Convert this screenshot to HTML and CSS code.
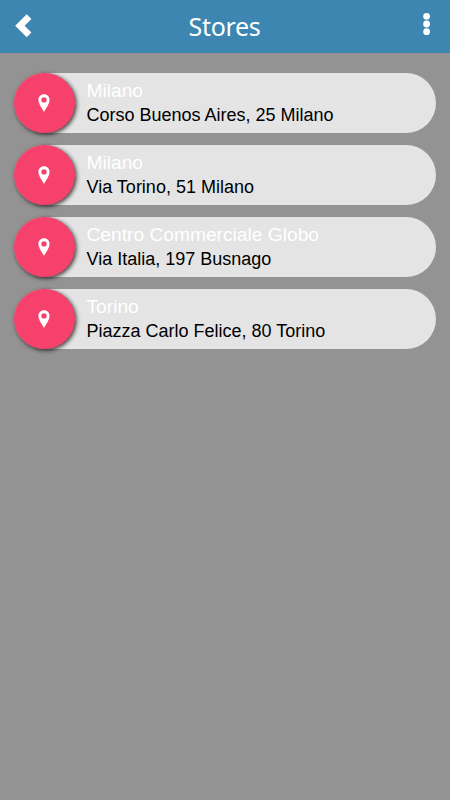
FILE: index.html
```html
<!DOCTYPE html>
<html lang="it">
<head>
  <meta charset="UTF-8">
  <meta name="viewport" content="width=device-width, initial-scale=1.0">
  <title>Stores</title>
  <link rel="stylesheet" href="styles.css">
</head>
<body>
  <svg width="0" height="0" class="sprite">
    <symbol id="pin" viewBox="0 0 12 18">
      <path fill-rule="evenodd" d="M6 0.3C2.8 0.3 0.4 2.7 0.4 5.9C0.4 9.7 6 17.7 6 17.7S11.6 9.7 11.6 5.9C11.6 2.7 9.2 0.3 6 0.3ZM6 3.2A2.7 2.7 0 1 1 6 8.6A2.7 2.7 0 1 1 6 3.2Z"/>
    </symbol>
  </svg>

  <header class="top-bar">
    <button class="bar-button" aria-label="Back">
      <svg width="18" height="24" viewBox="0 0 18 24"><path d="M11.7 0.2L16.4 4.9L9.6 11.7L16.4 18.5L11.7 23.2L0.2 11.7Z"/></svg>
    </button>
    <h1 class="title">Stores</h1>
    <button class="bar-button menu" aria-label="Menu">
      <svg width="8" height="24" viewBox="0 0 8 24"><circle cx="3.6" cy="4.3" r="3.4"/><circle cx="3.6" cy="12" r="3.4"/><circle cx="3.6" cy="19.7" r="3.4"/></svg>
    </button>
  </header>

  <ul class="stores">
    <li class="store">
      <span class="marker"><svg width="12" height="18"><use href="#pin"/></svg></span>
      <div class="info">
        <div class="name">Milano</div>
        <div class="address">Corso Buenos Aires, 25 Milano</div>
      </div>
    </li>
    <li class="store">
      <span class="marker"><svg width="12" height="18"><use href="#pin"/></svg></span>
      <div class="info">
        <div class="name">Milano</div>
        <div class="address">Via Torino, 51 Milano</div>
      </div>
    </li>
    <li class="store">
      <span class="marker"><svg width="12" height="18"><use href="#pin"/></svg></span>
      <div class="info">
        <div class="name">Centro Commerciale Globo</div>
        <div class="address">Via Italia, 197 Busnago</div>
      </div>
    </li>
    <li class="store">
      <span class="marker"><svg width="12" height="18"><use href="#pin"/></svg></span>
      <div class="info">
        <div class="name">Torino</div>
        <div class="address">Piazza Carlo Felice, 80 Torino</div>
      </div>
    </li>
  </ul>
</body>
</html>
```
FILE: styles.css
```css
* { box-sizing: border-box; }
body {
  margin: 0;
  min-height: 100vh;
  background: #939393;
  font-family: "Liberation Sans", Arial, sans-serif;
}
svg { display: block; fill: #fff; }
.sprite { display: none; }

.top-bar {
  display: grid;
  grid-template-columns: 40px 1fr 40px;
  align-items: center;
  height: 53px;
  padding: 0 19px 0 15px;
  background: #3c86b1;
}
.bar-button {
  padding: 0 0 2px;
  border: none;
  background: none;
  cursor: pointer;
}
.menu {
  display: flex;
  justify-content: flex-end;
  padding-bottom: 5px;
}

.title {
  margin: 0;
  padding-left: 3px;
  color: #fff;
  font-family: "Noto Sans", sans-serif;
  font-size: 25px;
  font-weight: 400;
  letter-spacing: -0.3px;
  line-height: 53px;
  text-align: center;
}

.stores {
  display: flex;
  flex-direction: column;
  gap: 12px;
  margin: 0;
  padding: 20px 14px;
  list-style: none;
}
.store {
  display: flex;
  align-items: center;
  height: 60px;
  background: #e4e4e4;
  border-radius: 30px;
}
.marker {
  display: flex;
  align-items: center;
  justify-content: center;
  width: 61px;
  height: 60px;
  padding-right: 1px;
  border-radius: 50%;
  background: #f6416c;
  box-shadow: 1.5px 1.5px 4px rgba(0, 0, 0, 0.75);
}
.info {
  padding-left: 11.5px;
  line-height: 24px;
  white-space: nowrap;
}
.name {
  color: #fff;
  font-size: 19.2px;
}
.address {
  color: #000;
  font-size: 18px;
}
```
